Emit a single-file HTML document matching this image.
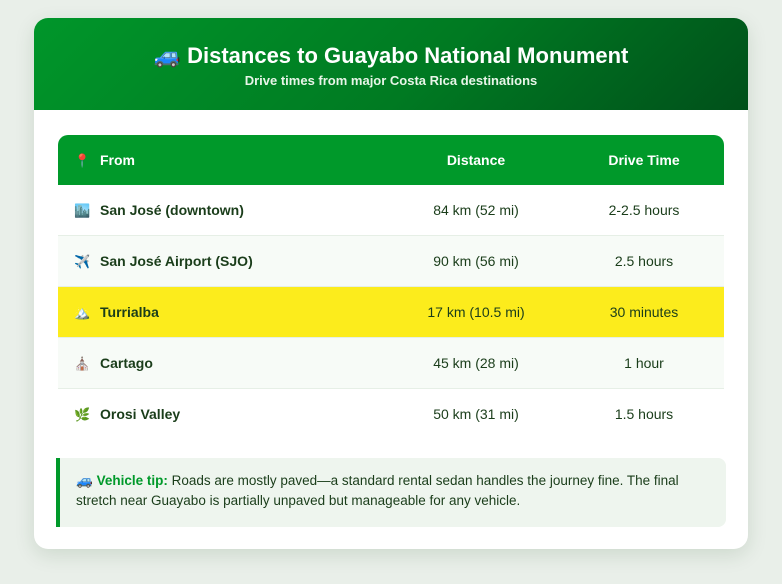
<!DOCTYPE html>
<html><head><meta charset="utf-8"><style>
body{margin:0;width:782px;height:584px;background:#e9efe9;font-family:"Liberation Sans",sans-serif;overflow:hidden}
.card{position:absolute;left:34px;top:18px;width:714px;height:531px;background:#fff;border-radius:14px;overflow:hidden;box-shadow:0 6px 20px rgba(0,60,0,.12)}
.hd{height:92px;background:linear-gradient(135deg,#00962a 0%,#007a22 55%,#00501a 100%);color:#fff;text-align:center}
.hd h1{margin:0;padding-top:24px;font-size:22px;line-height:28px;font-weight:bold}
.hd p{margin:3px 0 0;font-size:13px;font-weight:bold;color:#e8f5e8}
table{position:absolute;left:24px;top:117px;width:666px;border-collapse:collapse;font-size:14px;color:#1a3d1a}
th{background:#00992a;color:#fff;height:50px;padding:0;font-weight:bold;text-align:center}
th:first-child{border-top-left-radius:10px;text-align:left;padding-left:16px}
th:last-child{border-top-right-radius:10px}
td{height:50px;padding:0;text-align:center;border-bottom:1px solid #e6efe6}
td:first-child{text-align:left;padding-left:16px;font-weight:bold}
tr:nth-child(odd) td{background:#f7fbf7}
tr.hl td{background:#fcec1c}
tr:last-child td{border-bottom:none}
.i{display:inline-block;width:26px;font-size:13px}
.tip{position:absolute;left:22px;top:440px;height:69px;background:#eef5ee;border-left:4px solid #00992a;border-radius:0 8px 8px 0;padding:13px 12px 0 16px;box-sizing:border-box;width:670px;font-size:13.5px;line-height:20px;color:#1a3d1a}
.tip b{color:#00992a}
</style></head><body>
<div class="card">
<div class="hd"><h1>🚙 Distances to Guayabo National Monument</h1><p>Drive times from major Costa Rica destinations</p></div>
<table>
<tr><th style="width:314px"><span class="i">📍</span>From</th><th style="width:176px">Distance</th><th>Drive Time</th></tr>
<tr><td><span class="i">🏙️</span>San José (downtown)</td><td>84 km (52 mi)</td><td>2-2.5 hours</td></tr>
<tr><td><span class="i">✈️</span>San José Airport (SJO)</td><td>90 km (56 mi)</td><td>2.5 hours</td></tr>
<tr class="hl"><td><span class="i">🏔️</span>Turrialba</td><td>17 km (10.5 mi)</td><td>30 minutes</td></tr>
<tr><td><span class="i">⛪</span>Cartago</td><td>45 km (28 mi)</td><td>1 hour</td></tr>
<tr><td><span class="i">🌿</span>Orosi Valley</td><td>50 km (31 mi)</td><td>1.5 hours</td></tr>
</table>
<div class="tip">🚙 <b>Vehicle tip:</b> Roads are mostly paved—a standard rental sedan handles the journey fine. The final stretch near Guayabo is partially unpaved but manageable for any vehicle.</div>
</div>
</body></html>
